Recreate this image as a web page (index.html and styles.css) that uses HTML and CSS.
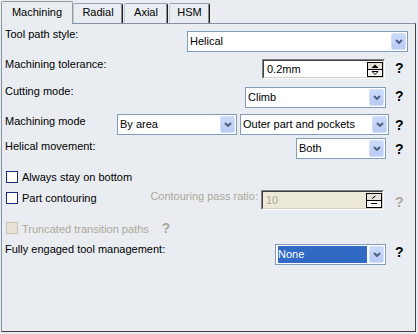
FILE: index.html
```html
<!DOCTYPE html>
<html lang="en">
<head>
    <meta charset="UTF-8">
    <title>Machining</title>
    <link rel="stylesheet" href="styles.css">
</head>
<body>
    <div class="dialog">
        <div class="tabs">
            <div class="tab active tab-machining">Machining</div>
            <div class="tab tab-radial">Radial</div>
            <div class="tab tab-axial">Axial</div>
            <div class="tab tab-hsm">HSM</div>
        </div>
        <div class="panel">
            <div class="row r-style">
                <span class="label">Tool path style:</span>
                <div class="combo w-style">
                    <span class="value">Helical</span>
                    <span class="drop"><svg width="8" height="5" viewBox="0 0 8 5"><polyline points="1,1 4,4 7,1" fill="none" stroke="#4d6185" stroke-width="2"/></svg></span>
                </div>
            </div>
            <div class="row r-tol">
                <span class="label">Machining tolerance:</span>
                <div class="spin">
                    <div class="spin-in">
                        <span class="value">0.2mm</span>
                        <svg class="spin-btns" width="16" height="15" viewBox="0 0 16 15"><rect x="0.5" y="0.5" width="15" height="14" fill="#e4e1d8" stroke="#000"/><rect x="1" y="8" width="14" height="6" fill="#f6f5f1"/><line x1="1" y1="7.5" x2="15" y2="7.5" stroke="#000"/><path d="M4.5 6 L8 2.5 L11.5 6 Z" fill="#000"/><path d="M5 9.5 L11 9.5 L8 12.5 Z" fill="none" stroke="#000"/></svg>
                    </div>
                </div>
                <span class="help">?</span>
            </div>
            <div class="row r-cut">
                <span class="label">Cutting mode:</span>
                <div class="combo w-cut">
                    <span class="value">Climb</span>
                    <span class="drop"><svg width="8" height="5" viewBox="0 0 8 5"><polyline points="1,1 4,4 7,1" fill="none" stroke="#4d6185" stroke-width="2"/></svg></span>
                </div>
                <span class="help">?</span>
            </div>
            <div class="row r-mode">
                <span class="label">Machining mode</span>
                <div class="combo w-area">
                    <span class="value">By area</span>
                    <span class="drop"><svg width="8" height="5" viewBox="0 0 8 5"><polyline points="1,1 4,4 7,1" fill="none" stroke="#4d6185" stroke-width="2"/></svg></span>
                </div>
                <div class="combo w-parts">
                    <span class="value">Outer part and pockets</span>
                    <span class="drop"><svg width="8" height="5" viewBox="0 0 8 5"><polyline points="1,1 4,4 7,1" fill="none" stroke="#4d6185" stroke-width="2"/></svg></span>
                </div>
                <span class="help">?</span>
            </div>
            <div class="row r-helical">
                <span class="label">Helical movement:</span>
                <div class="combo w-both">
                    <span class="value">Both</span>
                    <span class="drop"><svg width="8" height="5" viewBox="0 0 8 5"><polyline points="1,1 4,4 7,1" fill="none" stroke="#4d6185" stroke-width="2"/></svg></span>
                </div>
                <span class="help">?</span>
            </div>
            <div class="row r-bottom">
                <span class="check"></span>
                <span class="label">Always stay on bottom</span>
            </div>
            <div class="row r-contour">
                <span class="check"></span>
                <span class="label">Part contouring</span>
                <span class="label ratio disabled">Contouring pass ratio:</span>
                <div class="spin spin-off">
                    <div class="spin-in">
                        <span class="value">10</span>
                        <svg class="spin-btns" width="16" height="15" viewBox="0 0 16 15"><rect x="0.5" y="0.5" width="15" height="14" fill="#e4e1d8" stroke="#000"/><rect x="1" y="8" width="14" height="6" fill="#f6f5f1"/><line x1="1" y1="7.5" x2="15" y2="7.5" stroke="#000"/><path d="M6 5.5 L9.5 3" fill="none" stroke="#000"/><path d="M5 10.5 L11 10.5" fill="none" stroke="#000"/></svg>
                    </div>
                </div>
                <span class="help disabled">?</span>
            </div>
            <div class="row r-trunc">
                <span class="check check-off"></span>
                <span class="label disabled">Truncated transition paths</span>
                <span class="help help-inline disabled">?</span>
            </div>
            <div class="row r-engaged">
                <span class="label">Fully engaged tool management:</span>
                <div class="combo w-none">
                    <span class="value selected">None</span>
                    <span class="drop"><svg width="8" height="5" viewBox="0 0 8 5"><polyline points="1,1 4,4 7,1" fill="none" stroke="#4d6185" stroke-width="2"/></svg></span>
                </div>
                <span class="help">?</span>
            </div>
        </div>
    </div>
</body>
</html>
```

FILE: styles.css
```css
body {
    margin: 0;
    background-color: #e9edf1;
    font-family: "Liberation Sans", Arial, sans-serif;
    font-size: 11px;
    line-height: 13px;
    color: #000;
}
.dialog {
    width: 418px;
    height: 334px;
}
.tabs {
    display: flex;
    align-items: flex-end;
    height: 23px;
    padding-left: 1px;
}
.tab {
    box-sizing: border-box;
    height: 20px;
    padding-top: 2px;
    text-align: center;
    border-top: 1px solid #97a3b3;
    border-left: 1px solid #c2cad6;
    border-right: 1px solid #1e1e1e;
    border-radius: 2px 2px 0 0;
    box-shadow: inset -1px 0 #8a8a8a;
    background-color: #e9edf1;
}
.tab.active {
    position: relative;
    z-index: 1;
    height: 23px;
    margin-bottom: -1px;
    padding-top: 4px;
    border-color: #919b9c;
    box-shadow: none;
}
.tab-machining { width: 72px; }
.tab-radial { width: 50px; }
.tab-axial { width: 44px; margin-left: 1px; }
.tab-hsm { width: 41px; margin-left: 1px; }
.panel {
    box-sizing: border-box;
    width: 415px;
    height: 309px;
    margin-left: 1px;
    padding: 0 7px 0 3px;
    border: 1px solid;
    border-color: #8592a4 #404040 #404040 #8592a4;
}
.row {
    display: flex;
    align-items: flex-start;
}
.label {
    white-space: nowrap;
}
.disabled {
    color: #aca899;
}

/* combo boxes */
.combo {
    box-sizing: border-box;
    display: flex;
    height: 21px;
    padding: 1px;
    border: 1px solid #7f9db9;
    background-color: #fff;
}
.combo .value {
    flex: 1;
    padding-left: 1px;
    line-height: 17px;
    white-space: nowrap;
    overflow: hidden;
}
.combo .value.selected {
    margin: 0 2px 0 1px;
    padding-left: 0;
    background-color: #316ac5;
    color: #fff;
}
.drop {
    box-sizing: border-box;
    display: flex;
    align-items: center;
    justify-content: center;
    width: 15px;
    height: 17px;
    border: 1px solid #d3dffb;
    border-radius: 2px;
    background: linear-gradient(#ccdafa, #b9cbf5);
}
.w-style { width: 221px; margin-left: auto; }
.w-cut { width: 141px; margin-left: auto; margin-right: 3px; }
.w-area { width: 120px; margin-left: auto; }
.w-parts { width: 149px; margin-left: 3px; }
.w-both { width: 90px; margin-left: auto; margin-right: 3px; }
.w-none { width: 111px; margin-left: auto; margin-right: 3px; }

/* spinners */
.spin {
    box-sizing: border-box;
    display: flex;
    width: 123px;
    height: 20px;
    margin-left: auto;
    margin-right: 4px;
    border: 1px solid;
    border-color: #808080 #fff #fff #808080;
}
.spin-in {
    flex: 1;
    display: flex;
    align-items: center;
    border: 1px solid;
    border-color: #404040 #d4d0c8 #d4d0c8 #404040;
    background-color: #fff;
}
.spin .value {
    flex: 1;
    padding-left: 3px;
    line-height: 16px;
}
.spin-off {
    margin-left: 3px;
    margin-right: 5px;
}
.spin-off .spin-in {
    background-color: #ece9d8;
}
.spin-off .value {
    color: #aca899;
}

/* check boxes */
.check {
    box-sizing: border-box;
    width: 12px;
    height: 12px;
    margin: 0 4px 0 1px;
    border: 1px solid #1f2b78;
    background-color: #fff;
}
.check-off {
    border-color: #c9c7ba;
    background-color: #e6e3d4;
}

.help {
    box-sizing: border-box;
    width: 19px;
    padding-left: 6px;
    margin-top: 5px;
    font-size: 14px;
    font-weight: bold;
    line-height: 16px;
}
.help-inline {
    width: auto;
    padding-left: 0;
    margin-left: 13px;
}

/* rows, top to bottom */
.r-style { height: 31px; }
.r-style .label { margin-top: 4px; }
.r-style .combo { margin-top: 7px; }
.r-tol { height: 28px; }
.r-tol .label { margin-top: 3px; }
.r-tol .spin { margin-top: 4px; }
.r-cut { height: 28px; }
.r-cut .label { margin-top: 2px; }
.r-cut .combo { margin-top: 4px; }
.r-mode { height: 25px; }
.r-mode .label { margin-top: 4px; }
.r-mode .combo { margin-top: 3px; }
.r-mode .help { margin-top: 6px; }
.r-helical { height: 26px; }
.r-helical .label { margin-top: 4px; }
.r-helical .combo { margin-top: 2px; }
.r-bottom { height: 26px; }
.r-bottom .check { margin-top: 9px; }
.r-bottom .label { margin-top: 9px; }
.r-contour { height: 26px; }
.r-contour .check { margin-top: 4px; }
.r-contour .label { margin-top: 4px; }
.r-contour .ratio { margin-top: 2px; margin-left: auto; }
.r-contour .spin { margin-top: 2px; }
.r-contour .help { margin-top: 6px; }
.r-trunc { height: 25px; }
.r-trunc .check { margin-top: 8px; }
.r-trunc .label { margin-top: 9px; }
.r-trunc .help { margin-top: 6px; }
.r-engaged { height: 30px; }
.r-engaged .label { margin-top: 4px; }
.r-engaged .combo { margin-top: 5px; }
```
